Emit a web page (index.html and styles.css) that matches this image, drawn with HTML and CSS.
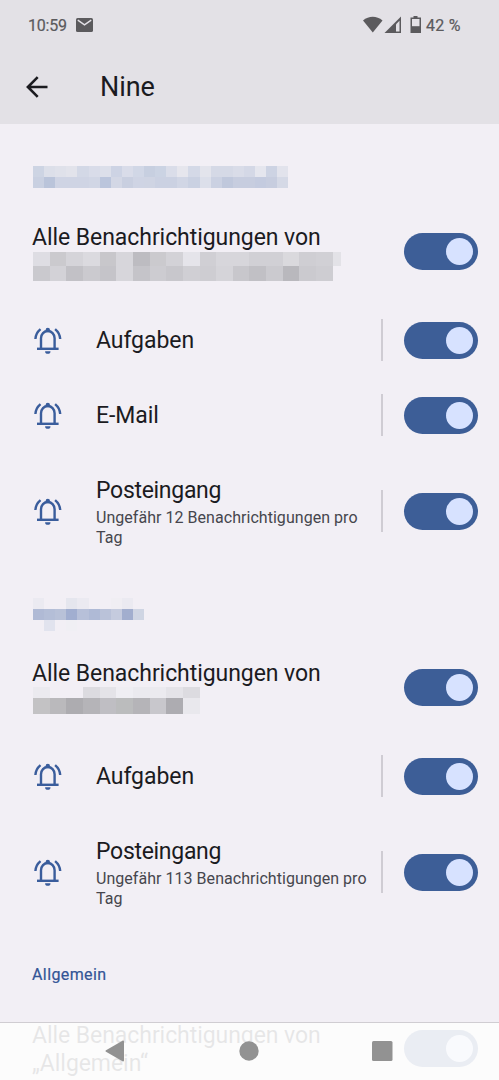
FILE: index.html
```html
<!DOCTYPE html>
<html lang="de">
<head>
  <meta charset="UTF-8">
  <meta name="viewport" content="width=device-width, initial-scale=1.0">
  <title>Nine</title>
  <link rel="stylesheet" href="styles.css">
</head>
<body>

  <svg class="defs" width="0" height="0">
    <symbol id="bell" viewBox="0 0 28 28">
      <g fill="none" stroke="currentColor" stroke-width="2.4">
        <path d="M3 21.8H24.6"/>
        <path d="M7 21.5V11.2a6.8 7.2 0 0 1 13.6 0v10.3"/>
        <path d="M1.4 12C1.6 7.8 3.4 4.7 6.5 2.1M26.2 12C26 7.8 24.2 4.7 21.1 2.1"/>
      </g>
      <circle cx="13.8" cy="3" r="2.2" fill="currentColor"/>
      <path d="M11.1 24.2h5.4a2.7 2.6 0 0 1-5.4 0z" fill="currentColor"/>
    </symbol>
  </svg>

  <header>
    <div class="status">
      <span class="time">10:59</span>
      <svg class="mail" width="17" height="14" viewBox="0 0 17 14">
        <rect width="17" height="14" rx="1.6" fill="#5b5a5d"/>
        <path d="M1.8 2.2L8.5 6.8l6.7-4.6" fill="none" stroke="#e3e1e6" stroke-width="1.5"/>
      </svg>
      <svg class="signals" width="58" height="18" viewBox="0 0 58 18">
        <path d="M0 4.4C5.8-.4 13.7-.4 19.5 4.4L9.8 16.5z" fill="#5b5a5d"/>
        <path d="M21.5 17L38 .5V17z" fill="#5b5a5d"/>
        <path d="M33 8.2l3.5-3.5v10.7H33z" fill="#e3e1e6"/>
        <path d="M50.5 0h4v1.5H58V17H47.5V1.5h3z" fill="#5b5a5d"/>
        <path d="M49 3h7.5v7.2H49z" fill="#e3e1e6"/>
      </svg>
      <span class="battery">42 %</span>
    </div>
    <div class="toolbar">
      <svg width="22" height="22" viewBox="0 0 22 22" fill="none" stroke="#1b1b1f" stroke-width="2.6">
        <path d="M21.5 11H2M11.7 1.2L1.9 11l9.8 9.8"/>
      </svg>
      <h1>Nine</h1>
    </div>
  </header>

  <main>
    <section>
      <h2 class="first"><svg class="mosaic" data-cell="11.1" data-rows="11,11"
        data-colors="cdd4e3 dcdfe9 dfe1ea e2e3eb d3d8e6 d9dce9 dcdfea cdd3e4 d9dce9 d1d7e6 c7cfe0 cbd3e3 dadde9 e6e6ed d4d9e7 e3e4ec d5d9e6 d5d9e6 d9dce8 d4d8e6 e5e6ee cdd3e3 e2e3ec, c9d0e1 bac4da cfd4e4 cfd4e4 cfd4e4 d1d6e5 bbc5dc d3d7e5 c9cfe0 cfd4e4 cfd4e3 cbd1e2 cbd1e2 d1d6e5 cad1e2 dcdfea cbd1e2 c0c8dc c7cddf c7cddf c4cbdf c7cddf d5d9e6"></svg></h2>
      <div class="row all">
        <div class="label">
          <p>Alle Benachrichtigungen von</p>
          <svg class="mosaic" data-cell="16.65" data-rows="14,15"
            data-colors="dedde3 cbcace d5d4d9 dbdadf c8c7cb d7d6db bdbcc1 cbcace d3d2d7 e5e4ea d0cfd4 d7d6db d7d6db d1d0d5 d1d0d5 dad9dd cfced3 d1d0d5 e3e2e7/8, cac9ce d3d2d7 c2c1c6 cbcacf c5c4c9 d7d6db c5c4c9 cdccd1 c8c7cc d0cfd4 cecdd2 d5d4d9 c8c7cc c1c0c5 cbcacf b9b8bd cbcacf cecdd2"></svg>
        </div>
        <span class="toggle"></span>
      </div>
      <div class="row">
        <svg class="icon"><use href="#bell"/></svg>
        <div class="label"><p>Aufgaben</p></div>
        <span class="divider"></span>
        <span class="toggle"></span>
      </div>
      <div class="row">
        <svg class="icon"><use href="#bell"/></svg>
        <div class="label"><p>E-Mail</p></div>
        <span class="divider"></span>
        <span class="toggle"></span>
      </div>
      <div class="row tall">
        <svg class="icon"><use href="#bell"/></svg>
        <div class="label">
          <p>Posteingang</p>
          <small>Ungefähr 12 Benachrichtigungen pro<br>Tag</small>
        </div>
        <span class="divider"></span>
        <span class="toggle"></span>
      </div>
    </section>

    <section>
      <h2><svg class="mosaic" data-cell="11.1" data-rows="11,11,11"
        data-colors="ebeaf1 - - e5e6ee ebeaf1 - - f0eef3 ebeaf1 -, b0bad5 b4bed7 b8c1d8 a1aed0 b7c0d9 afbad6 bac2d9 c5cbde a2aece cfd5e3, - e1e3ee - f0eff4"></svg></h2>
      <div class="row all">
        <div class="label">
          <p>Alle Benachrichtigungen von</p>
          <svg class="mosaic short" data-cell="16.65" data-rows="11,16"
            data-colors="ebeaef - - dcdbe0 e4e3e8 efeef3 ebeaef ebeaef e4e3e8 dcdbe0, c3c2c4 bab9bc adacb0 b5b4b8 bfbec3 bbbcbd b5b4b8 c8c7cc adacb1 e9e8ed"></svg>
        </div>
        <span class="toggle"></span>
      </div>
      <div class="row">
        <svg class="icon"><use href="#bell"/></svg>
        <div class="label"><p>Aufgaben</p></div>
        <span class="divider"></span>
        <span class="toggle"></span>
      </div>
      <div class="row tall">
        <svg class="icon"><use href="#bell"/></svg>
        <div class="label">
          <p>Posteingang</p>
          <small>Ungefähr 113 Benachrichtigungen pro<br>Tag</small>
        </div>
        <span class="divider"></span>
        <span class="toggle"></span>
      </div>
    </section>

    <section>
      <h2>Allgemein</h2>
      <div class="row all">
        <div class="label"><p>Alle Benachrichtigungen von<br>„Allgemein“</p></div>
        <span class="toggle"></span>
      </div>
    </section>
  </main>

  <nav>
    <svg width="20" height="22" viewBox="0 0 20 22"><path d="M18 1.5v19L1.5 11z" fill="#929292" stroke="#929292" stroke-width="2" stroke-linejoin="round"/></svg>
    <svg width="20" height="20" viewBox="0 0 20 20"><circle cx="10" cy="10" r="9.7" fill="#929292"/></svg>
    <svg width="21" height="20" viewBox="0 0 21 20"><rect width="20.5" height="20" rx="1.5" fill="#929292"/></svg>
  </nav>

  <script>
    // Redacted account names: one coloured block per cell, "-" leaves a gap
    document.querySelectorAll('.mosaic').forEach(svg => {
      const cell = parseFloat(svg.dataset.cell);
      const heights = svg.dataset.rows.split(',').map(Number);
      let y = 0;
      svg.dataset.colors.split(',').forEach((line, r) => {
        line.trim().split(/\s+/).forEach((item, i) => {
          const [color, width] = item.split('/');
          if (color === '-') return;
          const rect = document.createElementNS('http://www.w3.org/2000/svg', 'rect');
          rect.setAttribute('x', i * cell);
          rect.setAttribute('y', y);
          rect.setAttribute('width', width || cell);
          rect.setAttribute('height', heights[r]);
          rect.setAttribute('fill', '#' + color);
          svg.appendChild(rect);
        });
        y += heights[r];
      });
      svg.setAttribute('width', 310);
      svg.setAttribute('height', y);
    });
  </script>

</body>
</html>
```

FILE: styles.css
```css
* {
  box-sizing: border-box;
}

body {
  position: relative;
  margin: 0;
  height: 1080px;
  overflow: hidden;
  background-color: #f2eff5;
  color: #1b1b1f;
  font-family: Roboto, "Liberation Sans", sans-serif;
}

h1, h2, p {
  margin: 0;
  font-weight: 400;
}

.defs {
  position: absolute;
}

header {
  height: 124px;
  background-color: #e3e1e6;
}

.status {
  display: flex;
  align-items: center;
  height: 50px;
  padding: 0 38px 0 28px;
  color: #5b5a5d;
  font-size: 16px;
  -webkit-text-stroke: 0.2px #5b5a5d;
}

.time {
  width: 48px;
  letter-spacing: -0.2px;
}

.signals {
  margin-left: auto;
}

.battery {
  width: 35px;
  margin-left: 5px;
  letter-spacing: 0.3px;
  white-space: nowrap;
}

.toolbar {
  display: flex;
  align-items: center;
  height: 74px;
  padding-left: 26px;
}

.toolbar h1 {
  margin-left: 52px;
  font-size: 27px;
  letter-spacing: -0.1px;
}

h2 {
  height: 66px;
  padding: 28px 0 0 32px;
  color: #335596;
  font-size: 16px;
  letter-spacing: 0.4px;
  line-height: 32px;
  -webkit-text-stroke: 0.2px #335596;
}

h2.first {
  height: 76px;
  padding-top: 42px;
}

.mosaic {
  display: block;
  margin-left: 1px;
  shape-rendering: crispEdges;
}

.mosaic.short {
  margin-top: -1px;
  margin-bottom: 1px;
}

.row {
  display: flex;
  align-items: center;
  height: 75px;
  padding: 0 21px 0 34px;
}

.row.all {
  height: 103px;
  padding-left: 32px;
}

.row.all .label {
  padding-top: 2px;
}

.row.all .label:has(.short) {
  padding-top: 0;
}

.row.tall {
  height: 117px;
}

.row.tall .label {
  padding-top: 2px;
}

.row.tall .label p {
  margin-top: -1px;
  margin-bottom: 3px;
  letter-spacing: -0.3px;
}

.icon {
  width: 28px;
  height: 28px;
  margin-right: 34px;
  color: #3a5d9c;
}

.label {
  flex: 1;
  white-space: nowrap;
}

.label p {
  font-size: 23px;
  letter-spacing: -0.06px;
  line-height: 28px;
}

.label small {
  display: block;
  color: #46464d;
  font-size: 16px;
  letter-spacing: 0.04px;
  line-height: 20px;
}

.divider {
  width: 2px;
  height: 42px;
  margin-right: 21px;
  margin-bottom: 2px;
  background-color: #cfccd3;
}

.toggle {
  display: flex;
  justify-content: flex-end;
  align-items: center;
  width: 74px;
  height: 37px;
  padding-right: 5px;
  border-radius: 19px;
  background-color: #3d5e97;
}

.toggle::after {
  content: "";
  width: 27px;
  height: 27px;
  border-radius: 50%;
  background-color: #d7e2ff;
}

/* system navigation lies over the scrolled list */
nav {
  position: absolute;
  left: 0;
  right: 0;
  bottom: 0;
  display: flex;
  align-items: center;
  justify-content: space-between;
  height: 58px;
  padding: 0 106px 2px 105px;
  border-top: 1px solid #d0cdd2;
  background-color: rgba(253, 253, 253, 0.9);
}
```
